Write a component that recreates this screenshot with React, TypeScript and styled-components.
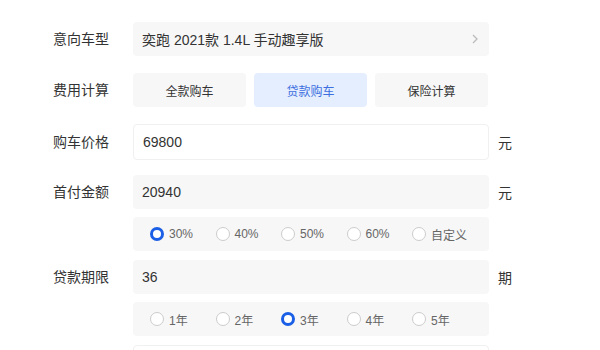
import React from 'react';
import styled, { createGlobalStyle } from 'styled-components';

const GlobalStyle = createGlobalStyle`
  html, body {
    margin: 0;
    padding: 0;
    background: #ffffff;
    font-family: 'Liberation Sans', 'Noto Sans CJK SC', sans-serif;
    color: #333333;
  }
`;

const blue = '#1b5fe6';

const Form = styled.div`
  display: flex;
  flex-direction: column;
  padding: 22px 0 0 53px;
`;

const Row = styled.div<{ $mt?: number }>`
  display: grid;
  grid-template-columns: 71px 356px auto;
  align-items: center;
  column-gap: 9px;
  margin-top: ${ ( p ) => p.$mt ?? 0 }px;
`;

const Label = styled.div`
  font-size: 14px;
  line-height: 20px;
  color: #333333;
`;

const Unit = styled.div`
  font-size: 14px;
  color: #333333;
`;

const Field = styled.div<{ $white?: boolean }>`
  box-sizing: border-box;
  height: ${ ( p ) => ( p.$white ? 36 : 34 ) }px;
  display: flex;
  align-items: center;
  justify-content: space-between;
  padding: 0 10px 0 9px;
  font-size: 14px;
  color: #333333;
  background: ${ ( p ) => ( p.$white ? '#ffffff' : '#f7f7f7' ) };
  border: ${ ( p ) => ( p.$white ? '1px solid #f0f0f0' : 'none' ) };
  border-radius: 4px;
`;

const Tabs = styled.div`
  display: grid;
  grid-template-columns: repeat(3, 113px);
  column-gap: 8px;
`;

const Tab = styled.div<{ $active?: boolean }>`
  height: 34px;
  display: flex;
  align-items: center;
  justify-content: center;
  font-size: 12px;
  border-radius: 4px;
  background: ${ ( p ) => ( p.$active ? '#e5eefe' : '#f7f7f7' ) };
  color: ${ ( p ) => ( p.$active ? '#3d6fe0' : '#333333' ) };
`;

const RadioBox = styled.div`
  box-sizing: border-box;
  height: 34px;
  display: grid;
  grid-template-columns: repeat(5, 65.5px);
  align-items: center;
  padding-left: 17px;
  background: #f7f7f7;
  border-radius: 4px;
`;

const Option = styled.div`
  display: flex;
  align-items: center;
  gap: 5px;
  font-size: 12px;
  color: #666666;
`;

const Dot = styled.span<{ $on?: boolean }>`
  box-sizing: border-box;
  width: 14px;
  height: 14px;
  border-radius: 50%;
  background: #ffffff;
  border: ${ ( p ) => ( p.$on ? `3px solid ${ blue }` : '1px solid #cccccc' ) };
`;

const Chevron = () => (
  <svg width="8" height="12" viewBox="0 0 8 12">
    <path d="M2 2 L6 6 L2 10" fill="none" stroke="#bbbbbb" strokeWidth="1.3" />
  </svg>
);

const Radios = ( { items, selected }: { items: string[]; selected: number } ) => (
  <RadioBox>
    { items.map( ( t, i ) => (
      <Option key={ t }>
        <Dot $on={ i === selected } />
        { t }
      </Option>
    ) ) }
  </RadioBox>
);

export default function App() {
  return (
    <>
      <GlobalStyle />
      <Form>
        <Row>
          <Label>意向车型</Label>
          <Field>
            <span>奕跑 2021款 1.4L 手动趣享版</span>
            <Chevron />
          </Field>
        </Row>
        <Row $mt={ 17 }>
          <Label>费用计算</Label>
          <Tabs>
            <Tab>全款购车</Tab>
            <Tab $active>贷款购车</Tab>
            <Tab>保险计算</Tab>
          </Tabs>
        </Row>
        <Row $mt={ 17 }>
          <Label>购车价格</Label>
          <Field $white>69800</Field>
          <Unit>元</Unit>
        </Row>
        <Row $mt={ 15 }>
          <Label>首付金额</Label>
          <Field>20940</Field>
          <Unit>元</Unit>
        </Row>
        <Row $mt={ 8 }>
          <span />
          <Radios items={ [ '30%', '40%', '50%', '60%', '自定义' ] } selected={ 0 } />
        </Row>
        <Row $mt={ 9 }>
          <Label>贷款期限</Label>
          <Field>36</Field>
          <Unit>期</Unit>
        </Row>
        <Row $mt={ 8 }>
          <span />
          <Radios items={ [ '1年', '2年', '3年', '4年', '5年' ] } selected={ 2 } />
        </Row>
        <Row $mt={ 9 }>
          <Label></Label>
          <Field $white />
        </Row>
      </Form>
    </>
  );
}
